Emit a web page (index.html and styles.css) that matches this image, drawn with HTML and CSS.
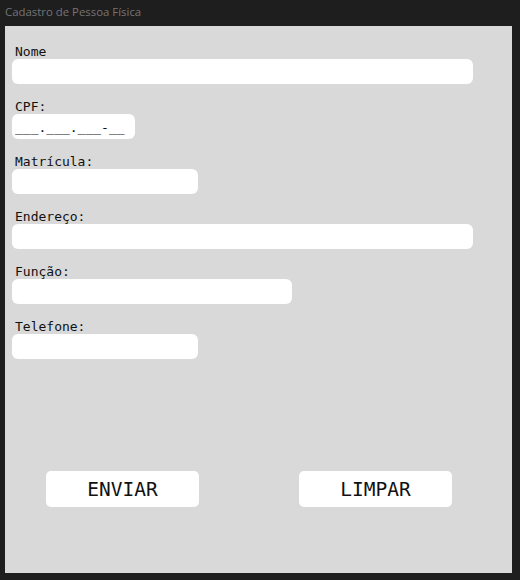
FILE: index.html
```html
<!DOCTYPE html>
<html lang="pt">
<head>
<meta charset="utf-8">
<title>Cadastro de Pessoa Física</title>
<link rel="stylesheet" href="styles.css">
</head>
<body>
<div class="titlebar">Cadastro de Pessoa Física</div>
<main class="panel">
  <div class="field">
    <label class="label">Nome</label>
    <div class="input w-long"></div>
  </div>
  <div class="field">
    <label class="label">CPF:</label>
    <div class="input w-cpf"><span class="mask">___.___.___-__</span></div>
  </div>
  <div class="field">
    <label class="label">Matrícula:</label>
    <div class="input w-short"></div>
  </div>
  <div class="field">
    <label class="label">Endereço:</label>
    <div class="input w-long"></div>
  </div>
  <div class="field">
    <label class="label">Função:</label>
    <div class="input w-mid"></div>
  </div>
  <div class="field">
    <label class="label">Telefone:</label>
    <div class="input w-short"></div>
  </div>
  <div class="actions">
    <button class="btn">ENVIAR</button>
    <button class="btn">LIMPAR</button>
  </div>
</main>
</body>
</html>
```
FILE: styles.css
```css
html, body {
  margin: 0;
  padding: 0;
  background: #1e1e1e;
  width: 520px;
  height: 580px;
  overflow: hidden;
}
.titlebar {
  height: 26px;
  box-sizing: border-box;
  padding: 5px 0 0 5px;
  font-family: "Open Sans", "Liberation Sans", sans-serif;
  font-size: 11.4px;
  line-height: 14px;
  color: #757575;
}
.panel {
  margin-left: 5px;
  width: 507px;
  height: 547px;
  box-sizing: border-box;
  background: #d9d9d9;
  padding: 18px 0 0 7px;
  font-family: "DejaVu Sans Mono", monospace;
  color: #111;
}
.field {
  display: flex;
  flex-direction: column;
  align-items: flex-start;
  margin-bottom: 15px;
}
.label {
  display: block;
  font-size: 13px;
  line-height: 15px;
  height: 15px;
  padding-left: 3px;
}
.input {
  height: 25px;
  background: #fff;
  border-radius: 6px;
  box-sizing: border-box;
  display: flex;
  align-items: flex-end;
  padding: 0 0 3px 3px;
}
.w-long { width: 461px; }
.w-cpf { width: 123px; }
.w-short { width: 186px; }
.w-mid { width: 280px; }
.mask {
  font-size: 13px;
  line-height: 16px;
}
.actions {
  display: flex;
  gap: 100px;
  margin-top: 112px;
  padding-left: 34px;
}
.btn {
  width: 153px;
  height: 36px;
  border: none;
  border-radius: 5px;
  background: #fff;
  font-family: "DejaVu Sans Mono", monospace;
  font-size: 19.5px;
  color: #111;
  padding: 0;
}
```
